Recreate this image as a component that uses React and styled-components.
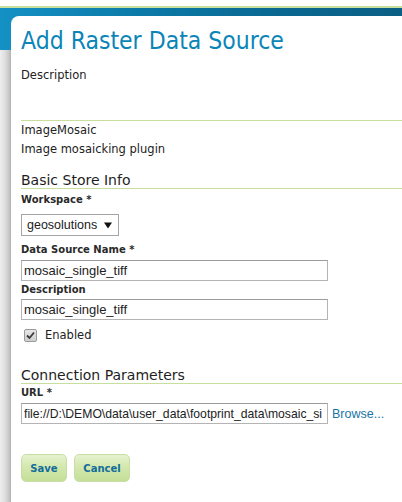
import React from 'react';
import styled, { createGlobalStyle } from 'styled-components';

const GlobalStyle = createGlobalStyle`
  html, body {
    margin: 0;
    padding: 0;
    background: #ffffff;
  }
  body {
    font-family: 'DejaVu Sans', Verdana, sans-serif;
    color: #222;
    overflow: hidden;
  }
`;

const Page = styled.div`
  width: 402px;
  height: 502px;
  padding-top: 6px;
  box-sizing: border-box;
  overflow: hidden;
`;

const Header = styled.div`
  height: 42px;
  border-top: 2px solid #c6df9c;
  background: linear-gradient(to right, #1490c4 0%, #0c7aa8 35%, #0a6790 70%, #0b5f84 100%);
`;

const Body = styled.div`
  display: flex;
`;

const Sidebar = styled.div`
  width: 11px;
  flex: none;
  height: 460px;
  background: linear-gradient(to right, #eeeeee 0%, #dcdcdc 50%, #c4c4c4 85%, #b0b0b0 100%);
`;

const Card = styled.div`
  flex: 1;
  margin-top: -34px;
  padding: 10px 0 0 10px;
  background: #fff;
  border-top-left-radius: 8px;
  min-width: 0;
`;

const Title = styled.h1`
  margin: 0;
  font-family: 'DejaVu Sans Condensed', 'DejaVu Sans', sans-serif;
  font-stretch: condensed;
  font-weight: normal;
  font-size: 24.5px;
  line-height: 30px;
  color: #0b85b8;
`;

const Text = styled.div`
  font-size: 11.5px;
  line-height: ${(p) => p.$lh || 16}px;
  color: #222;
`;

const Intro = styled.div`
  margin-top: 11px;
  padding-bottom: 37px;
  border-bottom: 1px solid #c6df9c;
`;

const SectionTitle = styled.h2`
  margin: ${(p) => p.$top}px 0 0;
  font-size: 14px;
  font-weight: normal;
  line-height: 16px;
  color: #1e1e1e;
  border-bottom: 1px solid #c6df9c;
`;

const Label = styled.div`
  margin-top: ${(p) => p.$top}px;
  font-size: 10px;
  font-weight: bold;
  line-height: 14px;
  color: #2a2a2a;
`;

const Select = styled.div`
  margin-top: 7px;
  width: 98px;
  height: 22px;
  box-sizing: border-box;
  border: 1px solid #a5a5a5;
  display: flex;
  align-items: center;
  gap: 7px;
  padding: 0 0 0 5px;
  font-family: 'Liberation Sans', Arial, sans-serif;
  font-size: 12.5px;
  color: #222;
`;

const Input = styled.div`
  margin-top: ${(p) => p.$top}px;
  width: 307px;
  height: 21px;
  box-sizing: border-box;
  border: 1px solid #b4b4b4;
  border-top-color: #9c9c9c;
  padding: 0 2px;
  display: flex;
  align-items: center;
  font-family: 'Liberation Sans', Arial, sans-serif;
  font-size: ${(p) => p.$size || 13}px;
  color: #222;
  flex: none;
`;

const Value = styled.span`
  display: block;
  width: 100%;
  white-space: nowrap;
  overflow: hidden;
`;

const CheckRow = styled.div`
  margin-top: 7px;
  height: 16px;
  display: flex;
  align-items: center;
  gap: 8px;
  padding-left: 3px;
`;

const Box = styled.span`
  width: 13px;
  height: 13px;
  box-sizing: border-box;
  border: 1px solid #9a9a9a;
  border-radius: 2px;
  background: linear-gradient(#e6e6e6, #cfcfcf);
  display: flex;
  align-items: center;
  justify-content: center;
`;

const UrlRow = styled.div`
  margin-top: 3px;
  display: flex;
  align-items: center;
  gap: 4px;
`;

const Link = styled.a`
  font-family: 'Liberation Sans', Arial, sans-serif;
  font-size: 12.5px;
  color: #1a74a8;
  text-decoration: none;
  white-space: nowrap;
`;

const Buttons = styled.div`
  margin-top: 30px;
  display: flex;
  gap: 7px;
`;

const Button = styled.button`
  height: 28px;
  width: ${(p) => p.$w}px;
  border: 1px solid #c8dea5;
  border-radius: 5px;
  background: linear-gradient(#e6f2cf 0%, #d3e8ae 45%, #c4df97 100%);
  font-family: 'DejaVu Sans', Verdana, sans-serif;
  font-weight: bold;
  font-size: 10px;
  color: #126d9c;
  padding: 0;
  cursor: pointer;
`;

const Arrow = () => (
  <svg width="8" height="7" viewBox="0 0 8 7">
    <path d="M0 0.5 H8 L4 6.5 Z" fill="#111" />
  </svg>
);

const Check = () => (
  <svg width="9" height="9" viewBox="0 0 9 9">
    <path d="M1 4.5 L3.5 7 L8 1.5" fill="none" stroke="#3a3a3a" strokeWidth="1.8" />
  </svg>
);

export default function App() {
  return (
    <Page>
      <GlobalStyle />
      <Header />
      <Body>
        <Sidebar />
        <Card>
          <Title>Add Raster Data Source</Title>
          <Intro>
            <Text>Description</Text>
          </Intro>
          <Text $lh={19}>ImageMosaic</Text>
          <Text $lh={19}>Image mosaicking plugin</Text>

          <SectionTitle $top={13}>Basic Store Info</SectionTitle>
          <Label $top={4}>Workspace *</Label>
          <Select>
            <span>geosolutions</span>
            <Arrow />
          </Select>
          <Label $top={7}>Data Source Name *</Label>
          <Input $top={3}>
            <Value>mosaic_single_tiff</Value>
          </Input>
          <Label $top={2}>Description</Label>
          <Input $top={2}>
            <Value>mosaic_single_tiff</Value>
          </Input>
          <CheckRow>
            <Box>
              <Check />
            </Box>
            <Text>Enabled</Text>
          </CheckRow>

          <SectionTitle $top={24}>Connection Parameters</SectionTitle>
          <Label $top={2}>URL *</Label>
          <UrlRow>
            <Input $top={0} $size={12.2}>
              <Value>file://D:\DEMO\data\user_data\footprint_data\mosaic_si</Value>
            </Input>
            <Link href="#">Browse...</Link>
          </UrlRow>

          <Buttons>
            <Button $w={46}>Save</Button>
            <Button $w={56}>Cancel</Button>
          </Buttons>
        </Card>
      </Body>
    </Page>
  );
}
